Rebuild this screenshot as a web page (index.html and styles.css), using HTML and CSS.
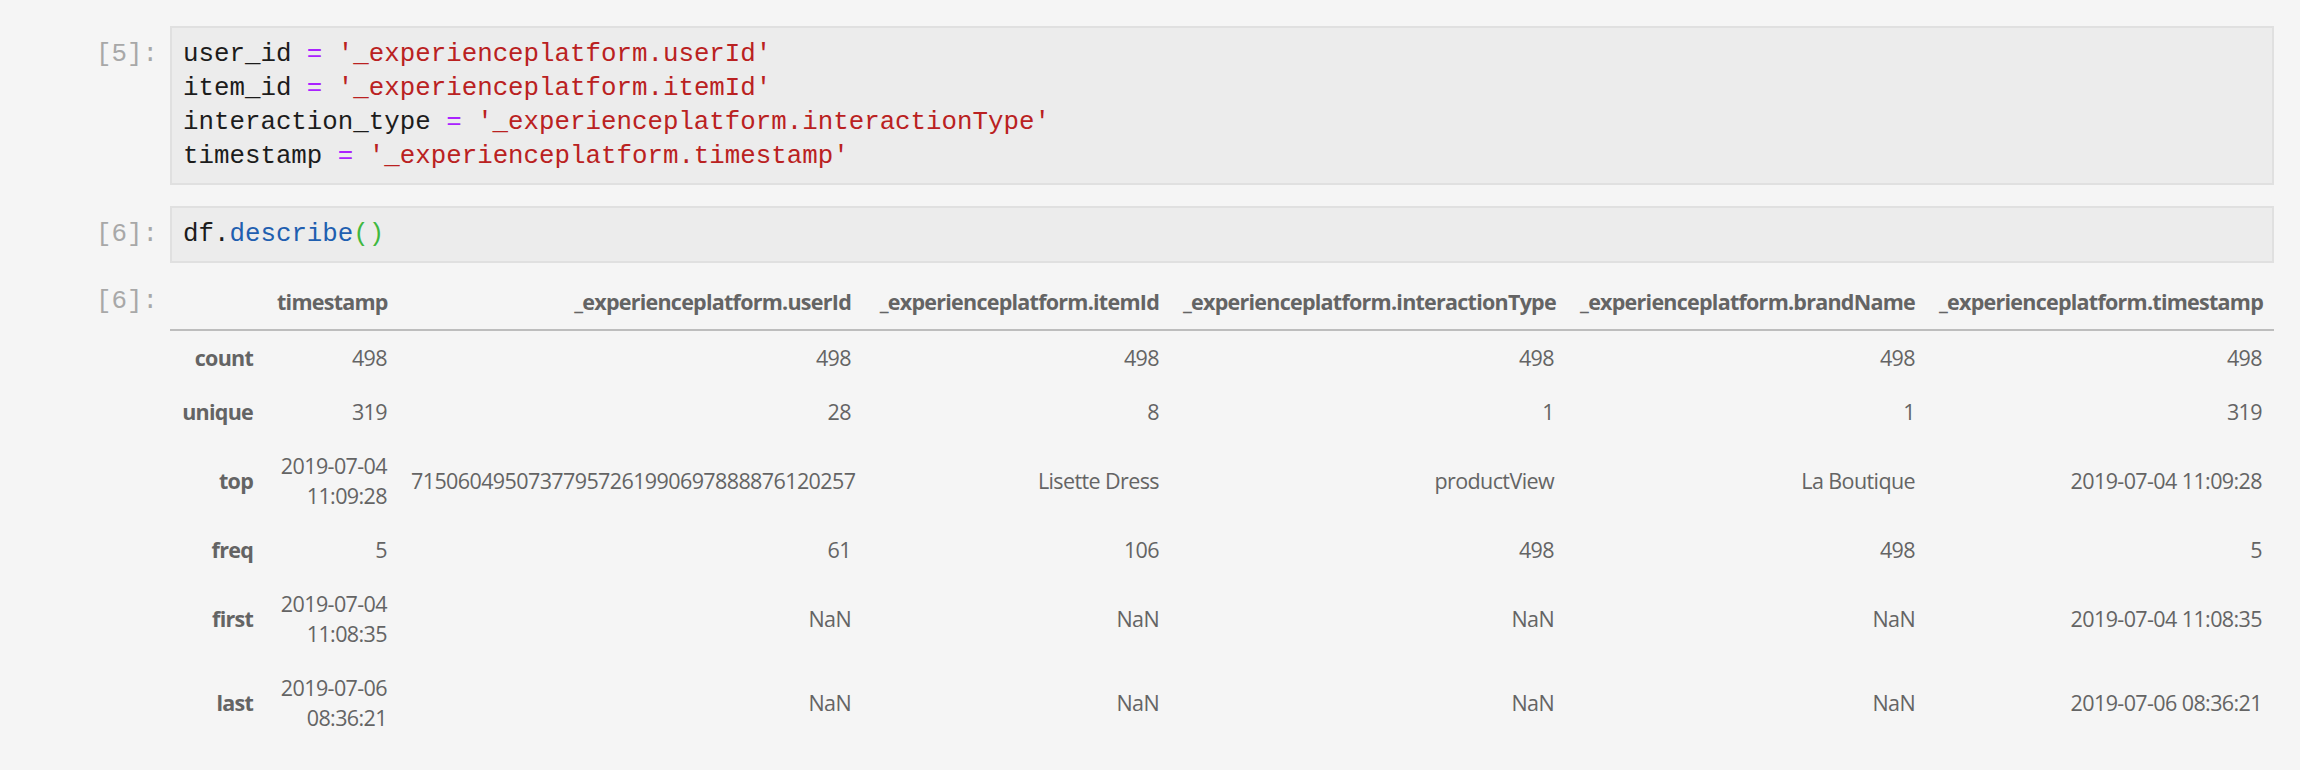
FILE: index.html
```html
<!DOCTYPE html>
<html>
<head>
<meta charset="utf-8">
<link rel="stylesheet" href="styles.css">
</head>
<body>
<div class="notebook">
  <div class="cell">
    <div class="prompt">[5]:</div>
    <div class="input"><pre class="code">user_id <span class="op">=</span> <span class="str">'_experienceplatform.userId'</span>
item_id <span class="op">=</span> <span class="str">'_experienceplatform.itemId'</span>
interaction_type <span class="op">=</span> <span class="str">'_experienceplatform.interactionType'</span>
timestamp <span class="op">=</span> <span class="str">'_experienceplatform.timestamp'</span></pre></div>
  </div>
  <div class="cell cell-next">
    <div class="prompt">[6]:</div>
    <div class="input"><pre class="code">df.<span class="prop">describe</span><span class="br">()</span></pre></div>
  </div>
  <div class="cell cell-output">
    <div class="prompt prompt-out">[6]:</div>
    <div class="output">
      <table class="df">
        <colgroup>
          <col class="c-idx"><col class="c-ts"><col class="c-user"><col class="c-item"><col class="c-type"><col class="c-brand"><col>
        </colgroup>
        <thead>
          <tr><th></th><th class="wrap">timestamp</th><th>_experienceplatform.userId</th><th>_experienceplatform.itemId</th><th>_experienceplatform.interactionType</th><th>_experienceplatform.brandName</th><th>_experienceplatform.timestamp</th></tr>
        </thead>
        <tbody>
          <tr><th>count</th><td class="wrap">498</td><td>498</td><td>498</td><td>498</td><td>498</td><td>498</td></tr>
          <tr><th>unique</th><td class="wrap">319</td><td>28</td><td>8</td><td>1</td><td>1</td><td>319</td></tr>
          <tr><th>top</th><td class="wrap">2019-07-04 11:09:28</td><td>71506049507377957261990697888876120257</td><td>Lisette Dress</td><td>productView</td><td>La Boutique</td><td>2019-07-04 11:09:28</td></tr>
          <tr><th>freq</th><td class="wrap">5</td><td>61</td><td>106</td><td>498</td><td>498</td><td>5</td></tr>
          <tr><th>first</th><td class="wrap">2019-07-04 11:08:35</td><td>NaN</td><td>NaN</td><td>NaN</td><td>NaN</td><td>2019-07-04 11:08:35</td></tr>
          <tr><th>last</th><td class="wrap">2019-07-06 08:36:21</td><td>NaN</td><td>NaN</td><td>NaN</td><td>NaN</td><td>2019-07-06 08:36:21</td></tr>
        </tbody>
      </table>
    </div>
  </div>
</div>
</body>
</html>
```

FILE: styles.css
```css
html, body {
  margin: 0;
  padding: 0;
  background: #f5f5f5;
}

.notebook {
  padding: 26px 26px 0 0;
}

.cell {
  display: flex;
  align-items: flex-start;
  gap: 12px;
}

.cell-next {
  margin-top: 21px;
}

.cell-output {
  margin-top: 12px;
}

.prompt {
  width: 158px;
  flex: none;
  text-align: right;
  font-family: "Liberation Mono", monospace;
  font-size: 25.8px;
  line-height: 34px;
  color: #a8a8a8;
  padding-top: 12px;
  white-space: nowrap;
}

.prompt-out {
  padding-top: 10px;
}

.input {
  flex: 1;
  min-width: 0;
  background: #ececec;
  border: 2px solid #e0e0e0;
  padding: 10px 12px 9px 11px;
}

.code {
  margin: 0;
  font-family: "Liberation Mono", monospace;
  font-size: 25.8px;
  line-height: 34px;
  color: #1c1c1c;
  white-space: pre;
}

.op { color: #aa22ff; }
.str { color: #ba2121; }
.prop { color: #1f5fb0; }
.br { color: #3fb83f; }

.output {
  flex: 1;
  min-width: 0;
}

.df {
  width: 100%;
  table-layout: fixed;
  border-collapse: collapse;
  border-spacing: 0;
  font-family: "Open Sans", sans-serif;
  font-size: 21.5px;
  letter-spacing: -0.6px;
  color: #646464;
}

.c-idx { width: 95px; }
.c-ts { width: 134px; }
.c-user { width: 464px; }
.c-item { width: 308px; }
.c-type { width: 395px; }
.c-brand { width: 361px; }

.df th, .df td {
  padding: 12px;
  line-height: 30px;
  text-align: right;
  vertical-align: middle;
  white-space: nowrap;
}

.df th {
  font-weight: 700;
  letter-spacing: -0.75px;
}

.df td {
  font-weight: 400;
}

.df .wrap {
  white-space: normal;
}

.df thead th {
  border-bottom: 2px solid #bdbdbd;
}
```
